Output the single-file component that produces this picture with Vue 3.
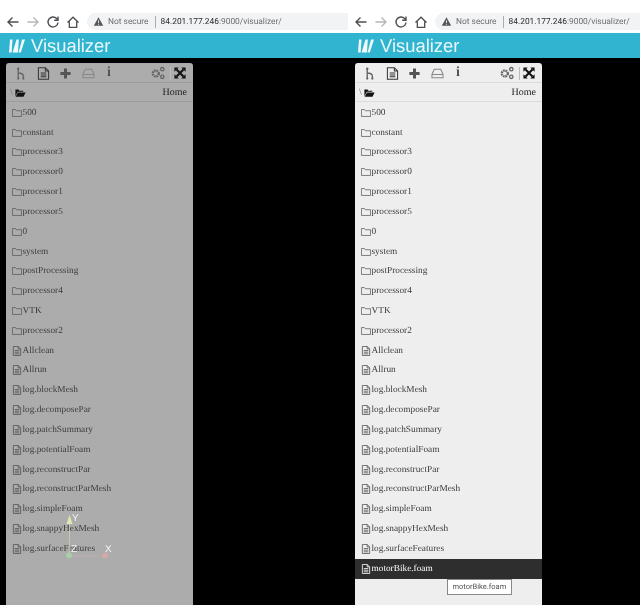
<script setup>
const folders = ['500','constant','processor3','processor0','processor1','processor5','0','system','postProcessing','processor4','VTK','processor2']
const files = ['Allclean','Allrun','log.blockMesh','log.decomposePar','log.patchSummary','log.potentialFoam','log.reconstructPar','log.reconstructParMesh','log.simpleFoam','log.snappyHexMesh','log.surfaceFeatures']
const panes = [
  { id: 'left', dimmed: true, rows: [...folders.map(n => ({ n, t: 'folder' })), ...files.map(n => ({ n, t: 'file' }))] },
  { id: 'right', dimmed: false, rows: [...folders.map(n => ({ n, t: 'folder' })), ...files.map(n => ({ n, t: 'file' })), { n: 'motorBike.foam', t: 'file', active: true }] }
]
</script>

<template>
  <div class="screen">
    <section v-for="p in panes" :key="p.id" class="pane" :class="p.id">
      <div class="chrome">
        <div class="navs">
          <svg class="nav" viewBox="0 0 14 14"><path d="M12.5 7H2M6.5 2.5 2 7l4.500 4.500" fill="none" stroke="#4c4f52" stroke-width="1.4"/></svg>
          <svg class="nav" viewBox="0 0 14 14"><path d="M1.500 7H12M7.500 2.500 12 7l-4.500 4.500" fill="none" stroke="#b4b6b9" stroke-width="1.4"/></svg>
          <svg class="nav" viewBox="0 0 14 14"><path d="M11.200 4.200A5 5 0 1 0 12 7.500M12 1.500v3.800H8.200" fill="none" stroke="#4c4f52" stroke-width="1.400"/></svg>
          <svg class="nav" viewBox="0 0 14 14"><path d="M1.500 7.500 7 2.200l5.500 5.300M3.300 6.500v5.800h7.400V6.500" fill="none" stroke="#4c4f52" stroke-width="1.300"/></svg>
        </div>
        <div class="omnibox">
          <svg class="warn" viewBox="0 0 14 14"><path d="M7 1.500 13 12.500H1Z" fill="#55585b"/><path d="M7 5.500v3.500M7 10v1.200" stroke="#f1f3f4" stroke-width="1.100"/></svg>
          <span class="insecure">Not secure</span>
          <span class="divider"></span>
          <span class="url">84.201.177.246<span class="urlrest">:9000/visualizer/</span></span>
        </div>
      </div>

      <header class="brand">
        <svg class="logo" viewBox="0 0 17 14"><path d="M2 .5h2.500L3.700 13.500H1ZM4.600 13.500 8.500 .5h2.300L10 13.500H7.300ZM10.600 13.500 14 .5h3L12.800 13.500Z" fill="#eefafc"/></svg>
        <span class="brandname">Visualizer</span>
      </header>

      <div class="stage">
        <div class="panel" :class="{ dim: p.dimmed }">
          <div class="toolbar">
            <svg class="tool first" viewBox="0 0 14 14"><circle cx="3.500" cy="1.800" r="1.300" fill="#666"/><path d="M3.500 2v11M3.500 6.500c3.500 0 5.500 1 5.500 3.500v3" fill="none" stroke="#666" stroke-width="1.500"/><circle cx="3.500" cy="12.500" r="1.200" fill="#666"/><circle cx="9" cy="12.500" r="1.200" fill="#666"/></svg>
            <svg class="tool" viewBox="0 0 14 14"><path d="M1.500.7h7.500l3.500 3.500v9.100h-11ZM9 .7v3.500h3.500M4 6.500h6M4 8.500h6M4 10.500h6" fill="none" stroke="#333" stroke-width="1.100"/></svg>
            <svg class="tool" viewBox="0 0 14 14"><path d="M7 1.500v11M1.500 7h11" fill="none" stroke="#555" stroke-width="3.200"/></svg>
            <svg class="tool" viewBox="0 0 14 14"><path d="M3.500 2.500h7L13 8v3.500H1V8ZM1 8h12" fill="none" stroke="#888" stroke-width="1.100"/></svg>
            <span class="info">i</span>
            <span class="grow"></span>
            <svg class="tool cogs" viewBox="0 0 14 14"><circle cx="4.800" cy="7.500" r="3" fill="none" stroke="#666" stroke-width="2.400" stroke-dasharray="1.700 .7"/><circle cx="11.300" cy="3.200" r="1.700" fill="none" stroke="#666" stroke-width="1.300"/><circle cx="11.300" cy="10.800" r="1.700" fill="none" stroke="#666" stroke-width="1.300"/></svg>
            <span class="sep"></span>
            <svg class="tool expand" viewBox="0 0 14 14"><path d="M3 3l8 8M11 3l-8 8" stroke="#111" stroke-width="2.400"/><path d="M.5.500h5L.5 5.500ZM13.500.5h-5l5 5ZM.5 13.500h5l-5-5ZM13.500 13.500h-5l5-5Z" fill="#111"/></svg>
          </div>
          <div class="pathbar">
            <span class="slash">\</span>
            <svg class="openfolder" viewBox="0 0 14 12"><path d="M0.500 10V1.500h4l1 1.500h5v1.500H3.500Z M3.800 5.300H13.500L10.800 10.800H0.800Z" fill="#111"/></svg>
            <span class="grow"></span>
            <span class="home">Home</span>
          </div>
          <ul class="list">
            <li v-for="r in p.rows" :key="r.n" class="row" :class="{ active: r.active }">
              <svg v-if="r.t === 'folder'" class="ficon" viewBox="0 0 11 10"><path d="M.5 8.800V1.200h3.300l1 1.300h5.700v6.300Z" fill="none" stroke="currentColor" stroke-width=".8"/></svg>
              <svg v-else class="ficon" viewBox="0 0 11 11"><path d="M1.500.5h5.300l2.700 2.700v7.300h-8ZM6.800.5v2.700h2.700M3 5h5M3 6.800h5M3 8.600h5" fill="none" stroke="currentColor" stroke-width=".9"/></svg>
              <span class="name">{{ r.n }}</span>
            </li>
          </ul>
          <div v-if="!p.dimmed" class="tip">motorBike.foam</div>
          <svg v-if="p.dimmed" class="axes" viewBox="0 0 60 52">
            <path d="M9.500 45V12" stroke="#c8cfa8" stroke-width=".8" fill="none"/>
            <path d="M9.500 46H38" stroke="#c9b4b4" stroke-width=".8" fill="none"/>
            <path d="M9.500 5l3 9h-6Z" fill="#dfe8b0"/>
            <circle cx="9" cy="45.500" r="2.800" fill="#a6d0a8"/>
            <circle cx="45" cy="45.500" r="2.800" fill="#d8a8a8"/>
            <text x="12" y="11" class="axis">Y</text>
            <text x="11" y="42" class="axis">Z</text>
            <text x="45" y="42" class="axis">X</text>
          </svg>
        </div>
      </div>
    </section>
  </div>
</template>

<style scoped>
.screen { display: flex; width: 640px; height: 605px; overflow: hidden; background: #000; filter: blur(.35px); text-rendering: geometricPrecision; }
.pane { display: flex; flex-direction: column; height: 605px; flex: none; overflow: hidden; }
.pane.left { width: 348px; }
.pane.right { width: 292px; }
.chrome { display: flex; align-items: flex-start; height: 33px; padding-top: 13px; box-sizing: border-box; background: #fff; flex: none; }
.navs { display: flex; gap: 6px; padding-left: 6px; width: 87px; box-sizing: border-box; flex: none; }
.nav { width: 14px; height: 14px; margin-top: 2px; }
.omnibox { flex: 1; height: 17px; display: flex; align-items: center; background: #f1f3f4; border-radius: 9px 0 0 9px; font-family: Roboto, "Liberation Sans", sans-serif; white-space: nowrap; overflow: hidden; min-width: 0; }
.warn { width: 11px; height: 11px; margin-left: 6px; flex: none; }
.insecure { margin-left: 4px; color: #6b6e71; font-size: 8.400px; }
.divider { width: 1px; height: 12px; background: #a9abad; margin: 0 5px 0 6px; flex: none; }
.url { color: #2a2c2e; font-size: 8.400px; }
.urlrest { color: #6b6e71; }
.brand { display: flex; align-items: center; height: 25px; background: #30b4d0; flex: none; color: #eaf9fb; padding-left: 8px; }
.pane.right .brand { padding-left: 9px; }
.logo { width: 17px; height: 14px; flex: none; }
.brandname { font: 18.400px "Liberation Sans", Arial, sans-serif; margin-left: 6px; }
.stage { flex: 1; background: #000; padding: 5px 0 0 6px; min-height: 0; }
.pane.right .stage { padding-left: 7px; }
.panel { position: relative; width: 187px; height: 600px; background: #eeeeee; border-radius: 3px 3px 0 0; font-family: "Liberation Serif", "Times New Roman", serif; color: #333; overflow: hidden; }
.panel.dim { background: #acacac; }
.toolbar { display: flex; align-items: center; height: 20px; padding: 1px 7px 0 8px; box-sizing: border-box; border-bottom: 1px solid #dcdcdc; }
.dim .toolbar, .dim .pathbar { border-color: #9c9c9c; }
.tool { width: 13px; height: 13px; flex: none; margin-right: 9.500px; }
.tool.first { margin-left: 1px; margin-right: 8.500px; }
.info { font: bold 14px "Liberation Serif", serif; color: #555; width: 8px; margin-left: 1px; text-align: center; }
.grow { flex: 1; }
.tool.cogs { width: 14px; height: 14px; margin-right: 5px; }
.sep { width: 1px; height: 13px; background: #bbb; margin-right: 3.500px; flex: none; }
.tool.expand { width: 12px; height: 12px; margin-right: 0; }
.pathbar { display: flex; align-items: center; height: 19px; padding: 1px 6px 0 4px; box-sizing: border-box; border-bottom: 1px solid #dcdcdc; font-size: 10px; }
.slash { color: #777; margin-right: 2px; }
.openfolder { width: 11px; height: 10px; }
.home { color: #222; }
.list { list-style: none; margin: 0; padding: .800px 0 0; }
.row { display: flex; align-items: center; height: 19.830px; padding-left: 5.500px; font-size: 9.300px; white-space: nowrap; color: #3c3c3c; }
.row.active { background: #2e2e2e; color: #fff; }
.ficon { width: 10px; height: 10px; flex: none; margin-right: 1px; color: #555; }
.active .ficon { color: #fff; }
.tip { position: absolute; left: 92px; top: 516px; padding: 0 4.500px; height: 14px; border: 1px solid #888; background: #fff; font: 7.500px/14px Roboto, "Liberation Sans", sans-serif; color: #555; }
.axes { position: absolute; left: 54px; top: 447px; width: 60px; height: 52px; }
.axis { font: 10px "Liberation Sans", sans-serif; fill: #f4f4f4; }
</style>
